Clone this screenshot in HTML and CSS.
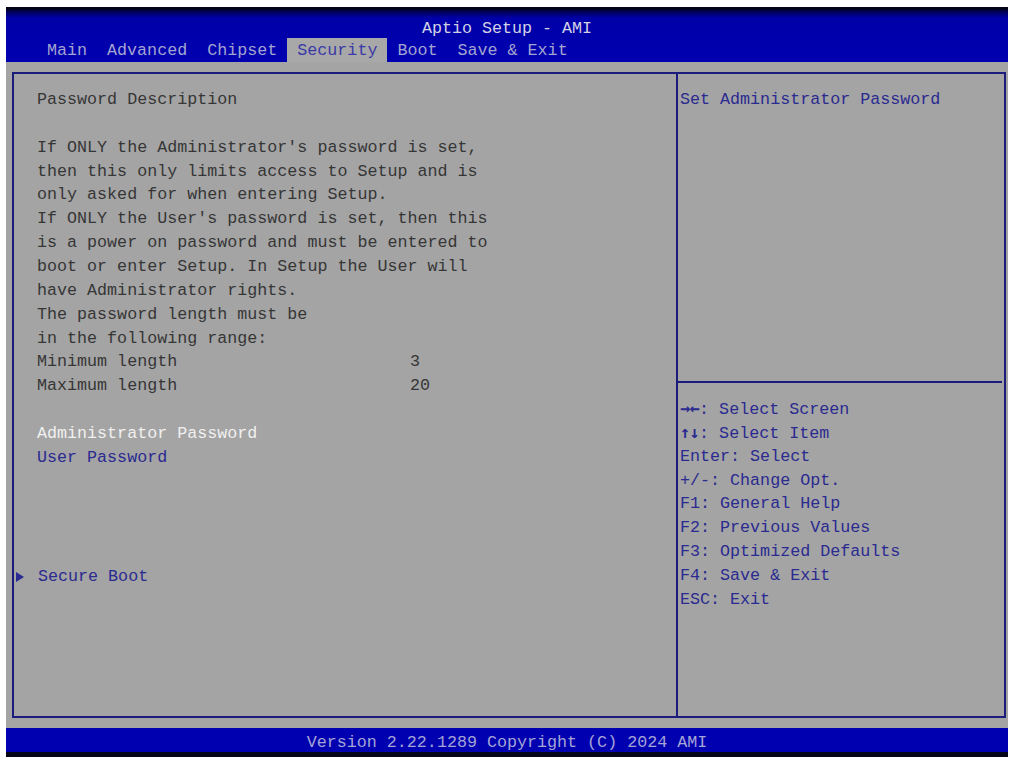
FILE: index.html
```html
<!DOCTYPE html>
<html>
<head>
<meta charset="utf-8">
<title>Aptio Setup - AMI</title>
<link rel="stylesheet" href="styles.css">
</head>
<body>
<div class="screen">
  <header class="header">
    <div class="title">Aptio Setup - AMI</div>
    <nav class="tabs">
      <span class="tab">Main</span>
      <span class="tab">Advanced</span>
      <span class="tab">Chipset</span>
      <span class="tab active">Security</span>
      <span class="tab">Boot</span>
      <span class="tab">Save &amp; Exit</span>
    </nav>
  </header>
  <main class="main">
    <div class="frame">
      <section class="left">
        <div class="line">Password Description</div>
        <div class="line">&nbsp;</div>
        <div class="line">If ONLY the Administrator's password is set,</div>
        <div class="line">then this only limits access to Setup and is</div>
        <div class="line">only asked for when entering Setup.</div>
        <div class="line">If ONLY the User's password is set, then this</div>
        <div class="line">is a power on password and must be entered to</div>
        <div class="line">boot or enter Setup. In Setup the User will</div>
        <div class="line">have Administrator rights.</div>
        <div class="line">The password length must be</div>
        <div class="line">in the following range:</div>
        <div class="line range"><span>Minimum length</span><span>3</span></div>
        <div class="line range"><span>Maximum length</span><span>20</span></div>
        <div class="line">&nbsp;</div>
        <div class="line item selected">Administrator Password</div>
        <div class="line item">User Password</div>
        <div class="line">&nbsp;</div>
        <div class="line">&nbsp;</div>
        <div class="line">&nbsp;</div>
        <div class="line">&nbsp;</div>
        <div class="line item submenu"><span class="arrow"></span>Secure Boot</div>
      </section>
      <aside class="right">
        <div class="help-top">
          <div class="line">Set Administrator Password</div>
        </div>
        <div class="help-keys">
          <div class="line"><span class="keys">→←</span>: Select Screen</div>
          <div class="line"><span class="keys">↑↓</span>: Select Item</div>
          <div class="line">Enter: Select</div>
          <div class="line">+/-: Change Opt.</div>
          <div class="line">F1: General Help</div>
          <div class="line">F2: Previous Values</div>
          <div class="line">F3: Optimized Defaults</div>
          <div class="line">F4: Save &amp; Exit</div>
          <div class="line">ESC: Exit</div>
        </div>
      </aside>
    </div>
  </main>
  <footer class="footer">Version 2.22.1289 Copyright (C) 2024 AMI</footer>
</div>
</body>
</html>
```

FILE: styles.css
```css
html, body {
  margin: 0;
  padding: 0;
  background: #ffffff;
}

.screen {
  width: 1002px;
  height: 750px;
  margin: 7px 0 0 6px;
  background: #a4a4a4;
  display: flex;
  flex-direction: column;
  font-family: "Liberation Mono", "DejaVu Sans Mono", monospace;
  font-size: 16.7px;
  line-height: 23.86px;
  color: #363636;
}

.header {
  background: linear-gradient(to bottom, #000040 0px, #0000a8 8px, #0000b0 100%);
  border-top: 3px solid #05051a;
  padding-top: 7px;
  flex: none;
  height: 45px;
}

.title {
  height: 21px;
  line-height: 24px;
  text-align: center;
  color: #d2d2e4;
}

.tabs {
  display: flex;
  height: 24px;
  line-height: 25px;
  padding-left: 31px;
}

.tab {
  padding: 0 10px;
  color: #a4a4d0;
  white-space: pre;
}

.tab.active {
  background: #a8a8a8;
  color: #3a3aa6;
}

.main {
  flex: 1;
  padding: 10px 2px 10px 6px;
  display: flex;
}

.frame {
  flex: 1;
  display: flex;
  border: 2px solid #1c1c7c;
}

.left {
  width: 639px;
  flex: none;
  padding: 14px 0 0 23px;
}

.line {
  height: 23.86px;
  white-space: pre;
}

.range {
  display: grid;
  grid-template-columns: 373px auto;
}

.item {
  color: #2a2a90;
}

.item.selected {
  color: #f0f0f0;
}

.submenu {
  display: flex;
  align-items: center;
  margin-left: -22px;
}

.arrow {
  width: 0;
  height: 0;
  border-left: 8px solid #2a2a90;
  border-top: 5px solid transparent;
  border-bottom: 5px solid transparent;
  margin: 0 14px 0 1px;
}

.right {
  flex: 1;
  display: flex;
  flex-direction: column;
  border-left: 2px solid #1c1c7c;
  color: #2a2a90;
}

.keys {
  font-family: "DejaVu Sans Mono", monospace;
  font-weight: bold;
  letter-spacing: -0.5px;
}

.help-top {
  height: 309px;
  padding: 14px 0 0 2px;
  box-sizing: border-box;
  border-bottom: 2px solid #1c1c7c;
  margin-right: 2px;
}

.help-keys {
  padding: 14px 0 0 2px;
}

.footer {
  flex: none;
  height: 24px;
  line-height: 29px;
  background: #0000b0;
  border-bottom: 5px solid #05051a;
  text-align: center;
  color: #a4a4d6;
}
```
